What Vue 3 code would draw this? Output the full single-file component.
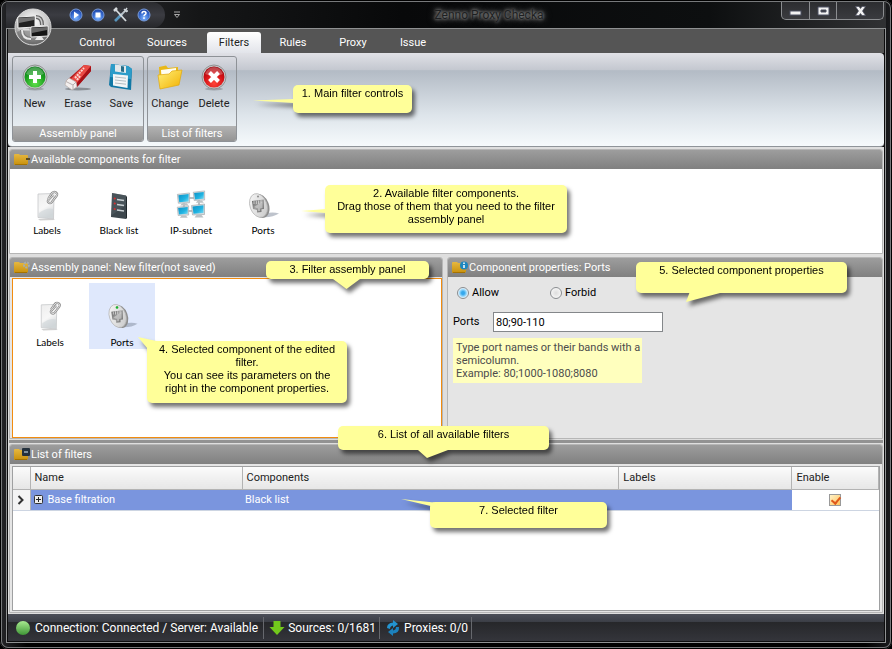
<script setup>
import { ref } from 'vue'

const tabs = ['Control', 'Sources', 'Filters', 'Rules', 'Proxy', 'Issue']
const activeTab = ref('Filters')
const mode = ref('allow')
const ports = ref('80;90-110')
const enabled = ref(true)
const available = [
  { name: 'Labels', icon: 'labels' },
  { name: 'Black list', icon: 'blacklist' },
  { name: 'IP-subnet', icon: 'subnet' },
  { name: 'Ports', icon: 'ports' }
]
const assembled = [
  { name: 'Labels', icon: 'labels' },
  { name: 'Ports', icon: 'ports' }
]
const selected = ref('Ports')
const notes = [
  { id: 1, lines: ['1. Main filter controls'] },
  { id: 2, lines: ['2. Available filter components.', 'Drag those of them that you need to the filter', 'assembly panel'] },
  { id: 3, lines: ['3. Filter assembly panel'] },
  { id: 4, lines: ['4. Selected component of the edited', 'filter.', 'You can see its parameters on the', 'right in the component properties.'] },
  { id: 5, lines: ['5. Selected component properties'] },
  { id: 6, lines: ['6. List of all available filters'] },
  { id: 7, lines: ['7. Selected filter'] }
]
</script>

<template>
  <svg class="defs" width="0" height="0" aria-hidden="true">
    <defs>
      <linearGradient id="gold" x1="0" y1="0" x2="0" y2="1"><stop offset="0" stop-color="#e6b840" /><stop offset="1" stop-color="#c8900c" /></linearGradient>
      <linearGradient id="paper" x1="0" y1="0" x2="0.4" y2="1"><stop offset="0" stop-color="#ededed" /><stop offset="0.6" stop-color="#f7f7f7" /><stop offset="1" stop-color="#d3d6d8" /></linearGradient>
      <linearGradient id="screen" x1="0" y1="0" x2="1" y2="1"><stop offset="0" stop-color="#0d8fc4" /><stop offset="0.6" stop-color="#20b4e2" /><stop offset="1" stop-color="#7fdcf4" /></linearGradient>
      <linearGradient id="disc" x1="0" y1="0" x2="1" y2="1"><stop offset="0" stop-color="#fafafa" /><stop offset="1" stop-color="#c5c5c5" /></linearGradient>
      <linearGradient id="jack" x1="0" y1="0" x2="1" y2="1"><stop offset="0" stop-color="#5c5c5c" /><stop offset=".5" stop-color="#a2a2a2" /><stop offset="1" stop-color="#686868" /></linearGradient>
      <radialGradient id="blue" cx="0.5" cy="0.75" r="0.75"><stop offset="0" stop-color="#7db4ff" /><stop offset="0.6" stop-color="#3467cc" /><stop offset="1" stop-color="#1c3f9c" /></radialGradient>
      <symbol id="ic-labels" viewBox="0 0 32 32">
        <path d="M7 30 22 29.500 24 31 9 31.500z" fill="#000" opacity=".18" />
        <path d="M7 5 23 4.500 22.500 30 7 28.500z" fill="url(#paper)" stroke="#c6c8ca" stroke-width=".8" />
        <path d="M8 24Q16 18 22 20V29L8 28z" fill="#cfd5d8" opacity=".6" />
        <path d="M17 10 21 4Q23 2 25 3.500T25.500 7L20.500 13.500Q19 15 17.500 13.500T17.500 11L22 6" fill="none" stroke="#8b8b8b" stroke-width="2.200" /><path d="M17 10 21 4Q23 2 25 3.500T25.500 7L20.500 13.500Q19 15 17.500 13.500T17.500 11L22 6" fill="none" stroke="#e9e9e9" stroke-width=".9" />
      </symbol>
      <symbol id="ic-blacklist" viewBox="0 0 32 32">
        <path d="M9 4 23 6.500 23 30 8 28z" fill="#3d474d" /><path d="M23 6.500 24 8V29L23 30z" fill="#20282c" />
        <path d="M9 4 23 6.500V16L9 26z" fill="#566168" opacity=".5" />
        <g fill="none"><path d="M11 10 12.500 9M11 15 12.500 14M11 20.500 12.500 19.500" stroke="#d23131" stroke-width="2" /><path d="M14 10.500 21 11.500M14 15.500 21 16.500M14 21 21 22" stroke="#c9d0d3" stroke-width="1.500" /></g>
      </symbol>
      <symbol id="mon" viewBox="0 0 16 16">
        <path d="M2 2.500 15 1 15 11.500 3 12z" fill="#d9dcde" stroke="#97a0a5" stroke-width=".6" /><path d="M3 3.500 14 2.200 14 10 4 10.800z" fill="url(#screen)" /><path d="M7 12h5l2 2.500H5z" fill="#bcc2c5" />
      </symbol>
      <symbol id="ic-subnet" viewBox="0 0 32 32">
        <path d="M9 9H24V22H9z" fill="none" stroke="#b9bfc3" stroke-width="2" />
        <use href="#mon" x="0" y="3" width="16" height="15" /><use href="#mon" x="16" y="1" width="15" height="14" /><use href="#mon" x="0" y="16" width="15" height="14" /><use href="#mon" x="14" y="14" width="17" height="16" />
      </symbol>
      <symbol id="ic-ports" viewBox="0 0 32 32">
        <path d="M14 28Q25 29 32 24.500 25 22.500 17 25z" fill="#7e8799" opacity=".5" />
        <ellipse cx="13.500" cy="17" rx="8.500" ry="12.300" transform="rotate(-20 13.500 17)" fill="#8d8d8d" /><ellipse cx="11.500" cy="16.500" rx="8.500" ry="12.300" transform="rotate(-20 11.500 16.500)" fill="url(#disc)" stroke="#b2b2b2" stroke-width=".7" />
        <path d="M5 12 17 10.500V20L14.500 20.300V23L10 23.500V21L6 20z" fill="url(#jack)" />
        <path d="M7 18 15.500 12.500V19L13 19.500V22L11 22V19.500z" fill="#d4d4d4" opacity=".6" />
        <path d="M7 12V15M9.300 11.700V15M11.600 11.500V15M14 11.200V14" stroke="#e2e2e2" stroke-width=".8" />
        <circle cx="11" cy="7.500" r="1" fill="#8a8a8a" />
      </symbol>
      <symbol id="folder" viewBox="0 0 18 14">
        <path d="M1 2Q1 1 2 1H6L7 2H14Q15 2 15 3V11L13 12H2Q1 12 1 11z" fill="url(#gold)" /><path d="M2 11.500H14" stroke="#a67300" />
      </symbol>
    </defs>
  </svg>

  <main class="window">
    <header class="titlebar">
      <div class="quick">
        <button class="orb" aria-label="Application menu">
          <svg width="38" height="38" viewBox="0 0 38 38"><defs><radialGradient id="orbg" cx=".5" cy=".35" r=".65"><stop offset="0" stop-color="#fff" /><stop offset=".65" stop-color="#c8c8c8" /><stop offset="1" stop-color="#707070" /></radialGradient></defs>
            <circle cx="19" cy="19" r="18" fill="url(#orbg)" stroke="#d9d9d9" /><path d="M3 24Q19 15 35 24Q31 36 19 36T3 24" fill="#4b4b4b" opacity=".4" /><path d="M8 22Q8 31 17 31" fill="none" stroke="#777" stroke-width="4" /><path d="M8 22Q8 31 17 31" fill="none" stroke="#e8e8e8" stroke-width="2" /><path d="M22 9Q28 9 28 17" fill="none" stroke="#666" stroke-width="4" /><path d="M22 9Q28 9 28 17" fill="none" stroke="#ccc" stroke-width="1.500" /><path d="M4 9 21 8 21 19 4 20z" fill="#222" stroke="#eee" /><path d="M5 10 20 9 20 12 5 15z" fill="#737373" /><path d="M9 20.500H15L16 22.500H8z" fill="#ddd" /><path d="M17 19 34 18 34 28 17 29z" fill="#151515" stroke="#eee" /><path d="M18 20 33 19 33 22 18 25z" fill="#666" /><path d="M23 29H28L30 32H21z" fill="#e8e8e8" /></svg>
        </button>
        <button aria-label="Start"><svg width="14" height="14" viewBox="0 0 14 14"><circle cx="7" cy="7" r="6" fill="url(#blue)" stroke="#789ad6" /><path d="M5 3.500 10 7 5 10.500z" fill="#fff" /></svg></button>
        <button aria-label="Stop"><svg width="14" height="14" viewBox="0 0 14 14"><circle cx="7" cy="7" r="6" fill="url(#blue)" stroke="#789ad6" /><rect x="4.500" y="4.500" width="5" height="5" fill="#fff" /></svg></button>
        <button aria-label="Settings"><svg width="16" height="16" viewBox="0 0 16 16"><path d="M2 14 9 7" stroke="#5795bd" stroke-width="2.600" /><path d="M7 9 12 4" stroke="#b9c2c8" stroke-width="1.800" /><path d="M11 2 14 5M14 1 12 4 15 4" stroke="#cfd6da" stroke-width="1.500" fill="none" /><path d="M3 3 13 14" stroke="#d6dbde" stroke-width="1.800" /><path d="M1 4 4 1" stroke="#d6dbde" stroke-width="2.500" /></svg></button>
        <button aria-label="Help"><svg width="14" height="14" viewBox="0 0 14 14"><circle cx="7" cy="7" r="6" fill="url(#blue)" stroke="#789ad6" /><path d="M5 5.500Q5 3.500 7 3.500T9 5.300Q9 6.300 7.500 7 7 7.400 7 8.300" fill="none" stroke="#fff" stroke-width="1.500" /><rect x="6.200" y="9.300" width="1.600" height="1.600" fill="#fff" /></svg></button>
      </div>
      <button class="more" aria-label="Customize"><svg width="8" height="8" viewBox="0 0 8 8"><path d="M1 1H7M1.500 3.500H6.500L4 6.500z" fill="none" stroke="#a9a9a9" /></svg></button>
      <h1>Zenno Proxy Checka</h1>
      <div class="winbtns">
        <button aria-label="Minimize"><svg width="13" height="10" viewBox="0 0 13 10"><rect x="1" y="5" width="11" height="4" fill="#f2f2f2" stroke="#4d5062" /></svg></button>
        <button aria-label="Maximize"><svg width="13" height="10" viewBox="0 0 13 10"><path d="M1 1H12V9H1zM4 4V6H9V4z" fill="#f2f2f2" fill-rule="evenodd" stroke="#4d5062" /></svg></button>
        <button class="close" aria-label="Close"><svg width="13" height="10" viewBox="0 0 13 10"><path d="M1.500.5H5L6.500 2.500 8 .5H11.500L8.500 5 11.500 9.500H8L6.500 7.500 5 9.500H1.500L4.500 5z" fill="#f2f2f2" stroke="#4d5062" stroke-width=".7" /></svg></button>
      </div>
    </header>

    <div class="client">
      <nav class="tabs">
        <button v-for="t in tabs" :key="t" :class="{ active: t === activeTab }" @click="activeTab = t">{{ t }}</button>
      </nav>

      <section class="ribbon">
        <div class="group">
          <div class="tools">
            <button><svg width="28" height="28" viewBox="0 0 28 28"><defs><radialGradient id="grn" cx=".5" cy=".8" r=".8"><stop offset="0" stop-color="#62e04c" /><stop offset=".6" stop-color="#1ba020" /><stop offset="1" stop-color="#087816" /></radialGradient></defs><ellipse cx="14" cy="26" rx="9" ry="1.500" opacity=".2" /><circle cx="14" cy="14" r="12" fill="#c4c8ca" stroke="#929292" /><circle cx="14" cy="14" r="10.500" fill="url(#grn)" /><path d="M5 11Q8 4 14 4T23 11Q14 15 5 11" fill="#fff" opacity=".25" /><path d="M12 8H16V12H20V16H16V20H12V16H8V12H12z" fill="#fff" /></svg>New</button>
            <button><svg width="28" height="28" viewBox="0 0 28 28"><ellipse cx="14" cy="26" rx="13" ry="1.500" opacity=".3" /><path d="M20 2 27 3 27 8 13 24 8 26 2 22 2 18z" fill="#b31b1b" /><path d="M20 2 27 3 13 20 6 17z" fill="#e94b45" /><path d="M13 20 27 3V8L13 24z" fill="#a61117" /><path d="M2 18 5 15 12 19 13 24 8 27 1 22z" fill="#f3efee" stroke="#b8b0ae" stroke-width=".7" /><path d="M2 18.500 9 22V26.500M9 22 12 19" fill="none" stroke="#b8b0ae" /><path d="M11 15 20 5M13 17 16 13" stroke="#fbd5cf" stroke-width="2" stroke-dasharray="2 1" /></svg>Erase</button>
            <button><svg width="28" height="28" viewBox="0 0 28 28"><path d="M4 1 21 3 25 6 24 27 4 24 2 22z" fill="#1178a5" /><path d="M4 1 21 3 25 6 24 16 3 14z" fill="#2c9cc9" /><path d="M8 1.500 19 3V10L8 8.500z" fill="#e3e8ea" /><path d="M14 3 17 3.500V9L14 8.500z" fill="#276d88" /><path d="M6 11 21 12.500 20.500 25 6 22.500z" fill="#f3f5f6" /><path d="M8 14 19 15.200M8 17 19 18.200M8 20 19 21.200" stroke="#b3bec3" /></svg>Save</button>
          </div>
          <div class="caption">Assembly panel</div>
        </div>
        <div class="group narrow">
          <div class="tools">
            <button><svg width="28" height="28" viewBox="0 0 28 28"><defs><linearGradient id="yel" x1="0" y1="0" x2="1" y2="1"><stop offset="0" stop-color="#fff07a" /><stop offset="1" stop-color="#f2b000" /></linearGradient></defs><path d="M3 4 10 2.500 12 5 22 4 22 20 4 24z" fill="#e9b818" /><path d="M5 7 20 5V18L6 21z" fill="#fffdf0" /><path d="M2 12 13 11 16 8 26 7 23 22 4 26z" fill="url(#yel)" stroke="#e1a80b" stroke-width=".7" /></svg>Change</button>
            <button><svg width="28" height="28" viewBox="0 0 28 28"><defs><radialGradient id="rd" cx=".5" cy=".8" r=".8"><stop offset="0" stop-color="#ff4538" /><stop offset=".6" stop-color="#d31015" /><stop offset="1" stop-color="#99060c" /></radialGradient></defs><ellipse cx="14" cy="26" rx="9" ry="1.500" opacity=".2" /><circle cx="14" cy="14" r="12" fill="#c4c8ca" stroke="#929292" /><circle cx="14" cy="14" r="10.500" fill="url(#rd)" /><path d="M5 11Q8 4 14 4T23 11Q14 15 5 11" fill="#fff" opacity=".25" /><path d="M9.500 9.500 18.500 18.500M18.500 9.500 9.500 18.500" stroke="#fff" stroke-width="4" /></svg>Delete</button>
          </div>
          <div class="caption">List of filters</div>
        </div>
      </section>

      <div class="workspace">
        <section class="panel">
          <h2><svg width="18" height="14"><use href="#folder" /><path d="M13 6H17" stroke="#5a4a20" stroke-width="2" /></svg>Available components for filter</h2>
          <div class="body palette">
            <button v-for="c in available" :key="c.name" class="comp"><svg width="32" height="32"><use :href="'#ic-' + c.icon" /></svg>{{ c.name }}</button>
          </div>
        </section>

        <div class="split">
          <section class="panel assembly">
            <h2><svg width="18" height="14"><use href="#folder" /><circle cx="13.500" cy="4" r="2.500" fill="none" stroke="#a5adb2" stroke-width="2" stroke-dasharray="2 1" /></svg>Assembly panel: New filter(not saved)</h2>
            <div class="body canvas">
              <button v-for="c in assembled" :key="c.name" class="comp" :class="{ sel: c.name === selected }" @click="selected = c.name"><svg width="32" height="32"><use :href="'#ic-' + c.icon" /><circle v-if="c.icon === 'ports'" cx="11" cy="7.500" r="1.300" fill="#18b52d" /></svg>{{ c.name }}</button>
            </div>
          </section>

          <section class="panel props">
            <h2><svg width="18" height="14"><use href="#folder" /><circle cx="13" cy="4.500" r="4" fill="#1c86c0" /><path d="M13 1.500V3M13 4V7" stroke="#fff" stroke-width="1.500" /></svg>Component properties: Ports</h2>
            <div class="body form">
              <div class="radios">
                <label><input v-model="mode" type="radio" value="allow" />Allow</label>
                <label><input v-model="mode" type="radio" value="forbid" />Forbid</label>
              </div>
              <div class="field"><label for="ports">Ports</label><input id="ports" v-model="ports" type="text" /></div>
              <p class="hint">Type port names or their bands with a<br />semicolumn.<br />Example: 80;1000-1080;8080</p>
            </div>
          </section>
        </div>

        <div class="splitter"></div>

        <section class="panel list">
          <h2><svg width="18" height="14"><use href="#folder" /><rect x="9" y="0" width="8" height="8" rx="1" fill="#24313d" /><path d="M11 4H15" stroke="#9fb0bd" stroke-width="1.500" /></svg>List of filters</h2>
          <div class="body grid">
            <table>
              <colgroup><col class="c-mark" /><col class="c-name" /><col /><col class="c-labels" /><col class="c-enable" /></colgroup>
              <thead><tr><th></th><th>Name</th><th>Components</th><th>Labels</th><th>Enable</th></tr></thead>
              <tbody>
                <tr>
                  <td class="mark"><svg width="8" height="10" viewBox="0 0 8 10"><path d="M1.500 1 5.500 5 1.500 9" fill="none" stroke="#333" stroke-width="2" /></svg></td>
                  <td><div class="namecell"><button aria-label="Expand"><svg width="9" height="9" viewBox="0 0 9 9"><rect x=".5" y=".5" width="8" height="8" rx="1" fill="#eee" stroke="#333" /><path d="M2 4.500H7M4.500 2V7" stroke="#222" /></svg></button>Base filtration</div></td>
                  <td>Black list</td><td></td>
                  <td class="enable"><input v-model="enabled" type="checkbox" aria-label="Enable Base filtration" /></td>
                </tr>
              </tbody>
            </table>
          </div>
        </section>
      </div>

      <footer class="status">
        <span><svg width="16" height="16" viewBox="0 0 16 16"><defs><linearGradient id="led" x1="0" y1="0" x2="0" y2="1"><stop offset="0" stop-color="#a8ea90" /><stop offset="1" stop-color="#3f9636" /></linearGradient></defs><circle cx="8" cy="8" r="7" fill="url(#led)" /></svg>Connection: Connected / Server: Available</span>
        <span><svg width="16" height="16" viewBox="0 0 16 16"><path d="M4.500 1H11.500V7H15.500L8 15 .5 7H4.500z" fill="#72c81c" /></svg>Sources: 0/1681</span>
        <span><svg width="16" height="16" viewBox="0 0 16 16"><path d="M2 8Q2 3 8 2.500V0L13 4 8 8V5.500Q5 6 5 9z" fill="#2393cf" /><path d="M14 7Q14.500 13 8 13.500V16L3 12 8 8V10.500Q11 10 11 7z" fill="#1c82bd" /></svg>Proxies: 0/0</span>
      </footer>
    </div>

    <aside v-for="n in notes" :key="n.id" class="note" :class="'n' + n.id"><div v-for="l in n.lines" :key="l">{{ l }}</div></aside>
  </main>
</template>

<style>
body { background: #000; }
</style>

<style scoped>
* { box-sizing: border-box; }
.defs { position: absolute; }
.window {
  position: relative; display: flex; flex-direction: column; min-height: 100vh; padding: 2px 6px 6px 6px;
  font: 11px/14px Roboto, "Liberation Sans", sans-serif; color: #222;
  background: linear-gradient(90deg, #26272a, #000 3%, #000 97%, #1c1d20);
  box-shadow: inset 0 0 0 1px #000, inset 0 0 0 2px #77797b; border-radius: 8px;
}
button { font: inherit; color: inherit; background: none; border: 0; padding: 0; display: flex; align-items: center; justify-content: center; }
h1, h2, p { margin: 0; font-weight: 400; }
.titlebar { display: flex; height: 26px; align-items: flex-start; background: linear-gradient(90deg, #333438, #151617 22%, #08090a 45%, #0d0f10 80%, #303133); }
.quick { display: flex; align-items: center; gap: 8px; height: 26px; padding-right: 14px; border-radius: 0 14px 14px 0; background: linear-gradient(#2a2b2f, #3b3c42 50%, #26272a); }
.orb { align-self: flex-start; margin: 6px 9px 0 8px; z-index: 2; }
.more { height: 26px; margin-left: 8px; }
h1 { flex: 1; padding-left: 16px; text-align: center; font-size: 12px; line-height: 26px; color: #1d1f21; text-shadow: 0 0 3px #999, 0 0 5px #888, 0 0 8px #777; }
.winbtns { display: flex; height: 18px; margin-right: 2px; border: 1px solid #8b8d90; border-top: 0; border-radius: 0 0 5px 5px; background: linear-gradient(#2c2d30, #3a3b3f); }
.winbtns button { width: 27px; }
.winbtns button + button { border-left: 1px solid #8b8d90; }
.winbtns .close { width: 47px; }
.client { flex: 1; display: flex; flex-direction: column; border: 1px solid #8f9192; padding: 0 1px 1px; background: #0c0c0d; }
.tabs { display: flex; align-items: flex-end; height: 24px; padding-left: 54px; background: #555; }
.tabs button { height: 21px; width: 70px; color: #fff; }
.tabs button:nth-child(3) { width: 54px; margin-left: 5px; }
.tabs button:nth-child(4) { width: 64px; }
.tabs button:nth-child(5) { width: 56px; }
.tabs button:nth-child(6) { width: 64px; }
.tabs .active { border-radius: 3px 3px 0 0; color: #222; background: linear-gradient(#fff, #e2e4ea); }
.ribbon { display: flex; gap: 3px; height: 94px; padding: 3px 4px 4px; border-radius: 0 4px 4px 4px; border-bottom: 1px solid #8f9499; background: linear-gradient(#e0e1e6, #c4c8d0 18%, #b3bbc5 19%, #dde4ea 66%, #f6fafc); }
.group { display: flex; flex-direction: column; width: 132px; border: 1px solid #8e9297; border-radius: 3px; overflow: hidden; }
.group.narrow { width: 90px; }
.tools { flex: 1; display: flex; }
.tools button { flex: 1; flex-direction: column; justify-content: flex-start; gap: 6px; padding-top: 6px; }
.caption { height: 15px; line-height: 15px; text-align: center; color: #fff; background: linear-gradient(#b3b3b3, #949494); }
.workspace { flex: 1; display: flex; flex-direction: column; gap: 3px; padding: 2px 1px 1px; background: #dedede; }
.panel { display: flex; flex-direction: column; border: 1px solid #b6b6b6; border-radius: 3px 3px 0 0; background: #e5e5e5; min-width: 0; }
h2 { display: flex; align-items: center; height: 19px; padding-left: 3px; font-size: 11px; color: #fff; border-radius: 2px 2px 0 0; background: linear-gradient(#9d9d9d, #808080); white-space: nowrap; }
h2 svg { flex: none; }
.palette { display: flex; gap: 6px; height: 84px; padding: 12px 4px; background: #fff; }
.comp { flex-direction: column; justify-content: flex-start; gap: 2px; width: 66px; height: 66px; padding-top: 8px; font: 10px/14px Lato, sans-serif; color: #000; }
.split { display: flex; gap: 4px; }
.splitter { height: 3px; margin: -2px 0; background: #929292; }
.assembly { flex: 434; }
.props { flex: 436; }
.canvas { display: flex; gap: 6px; height: 160px; margin: 1px 0 0 2px; padding: 4px; border: 1px solid #f18c10; background: #fff; }
.canvas .comp { gap: 4px; padding-top: 17px; }
.sel { background: #dfe8fc; }
.form { padding: 9px 5px; }
.radios { display: flex; gap: 51px; padding-left: 4px; color: #000; }
.radios label { display: flex; align-items: center; gap: 3px; }
.radios input { appearance: none; width: 12px; height: 12px; margin: 0; border: 1px solid #8a8d90; border-radius: 50%; background: radial-gradient(#ddd, #fff); }
.radios input:checked { background: radial-gradient(#35a8ec 20%, #8ad2fa 45%, #eaf6fd 70%); }
.field { display: flex; align-items: center; margin: 12px 0 6px; color: #000; }
.field label { width: 40px; }
.field input { width: 170px; height: 20px; padding: 0 2px; border: 1px solid #84878a; background: #fff; font: inherit; font-size: 11px; color: #000; }
.hint { width: 189px; padding: 3px 3px 3px; line-height: 13px; color: #4c4c4c; background: #ffffbe; white-space: nowrap; }
.list { flex: 1; }
.grid { flex: 1; margin: 2px 2px 1px 2px; border: 1px solid #9fa0a1; background: #fff; }
table { width: 100%; table-layout: fixed; border-collapse: collapse; }
.c-mark { width: 17px; } .c-name { width: 212px; } .c-labels { width: 20%; } .c-enable { width: 10%; }
th { height: 22px; padding: 0 4px; text-align: left; font-weight: 400; border-right: 1px solid #b3b3b3; border-bottom: 1px solid #b3b3b3; background: linear-gradient(#fbfbfb, #e6e6e6); }
td { height: 21px; padding: 0 3px; color: #fff; background: #7a95de; border-bottom: 1px solid #cdd5e2; }
.mark { padding: 0 0 0 4px; background: #f4f4f4; border-right: 1px solid #b3b3b3; }
.mark svg { display: block; }
.enable { background: #fff; text-align: center; }
.namecell { display: flex; align-items: center; gap: 5px; }
.enable input { appearance: none; display: block; width: 12px; height: 12px; margin: 0 auto; border: 1px solid #999; background: linear-gradient(135deg, #fff3c9, #ffc35c); position: relative; }
.enable input:checked::after { content: ""; position: absolute; left: 3px; top: 0; width: 4px; height: 7px; border: solid #e0581a; border-width: 0 2px 2px 0; transform: rotate(40deg); }
.status { display: flex; align-items: center; height: 27px; padding-left: 7px; font-size: 12px; color: #fff; background: linear-gradient(#4c4f58, #3c3f47 28%, #26272a 30%, #34353b); }
.status span { display: flex; align-items: center; gap: 4px; height: 22px; padding-right: 5px; border-right: 1px solid #66686d; }
.status span + span { gap: 3px; padding: 0 3px 0 5px; }
.status svg { flex: none; }
.note { position: absolute; padding: 2px 0; border-radius: 5px; font-family: "Liberation Sans", Arial, sans-serif; line-height: 13px; text-align: center; color: #000; background: #ffff99; filter: drop-shadow(3px 4px 2px rgba(0, 0, 0, .55)); }
.note::before { content: ""; position: absolute; background: #ffff99; }
.n1 { left: 293px; top: 85px; width: 119px; height: 28px; }
.n1::before { left: -40px; top: 14px; width: 41px; height: 4px; clip-path: polygon(0 40%, 100% 0, 100% 100%); }
.n2 { left: 325px; top: 185px; width: 242px; height: 48px; }
.n2::before { left: -24px; top: 24px; width: 25px; height: 4px; clip-path: polygon(0 50%, 100% 0, 100% 100%); }
.n3 { left: 266px; top: 261px; width: 163px; height: 18px; }
.n3::before { left: 67px; top: 18px; width: 27px; height: 10px; clip-path: polygon(0 0, 100% 0, 50% 100%); }
.n4 { left: 147px; top: 341px; width: 200px; height: 62px; }
.n4::before { left: -9px; top: -4px; width: 22px; height: 12px; clip-path: polygon(0 0, 100% 40%, 45% 100%); }
.n5 { left: 636px; top: 262px; width: 211px; height: 31px; }
.n5::before { left: 50px; top: 31px; width: 34px; height: 9px; clip-path: polygon(10% 0, 100% 0, 0 100%); }
.n6 { left: 338px; top: 426px; width: 211px; height: 24px; }
.n6::before { left: 80px; top: 24px; width: 30px; height: 8px; clip-path: polygon(0 0, 100% 0, 30% 100%); }
.n7 { left: 430px; top: 502px; width: 177px; height: 26px; }
.n7::before { left: -29px; top: -3px; width: 33px; height: 7px; clip-path: polygon(0 0, 100% 50%, 90% 100%); }
</style>
